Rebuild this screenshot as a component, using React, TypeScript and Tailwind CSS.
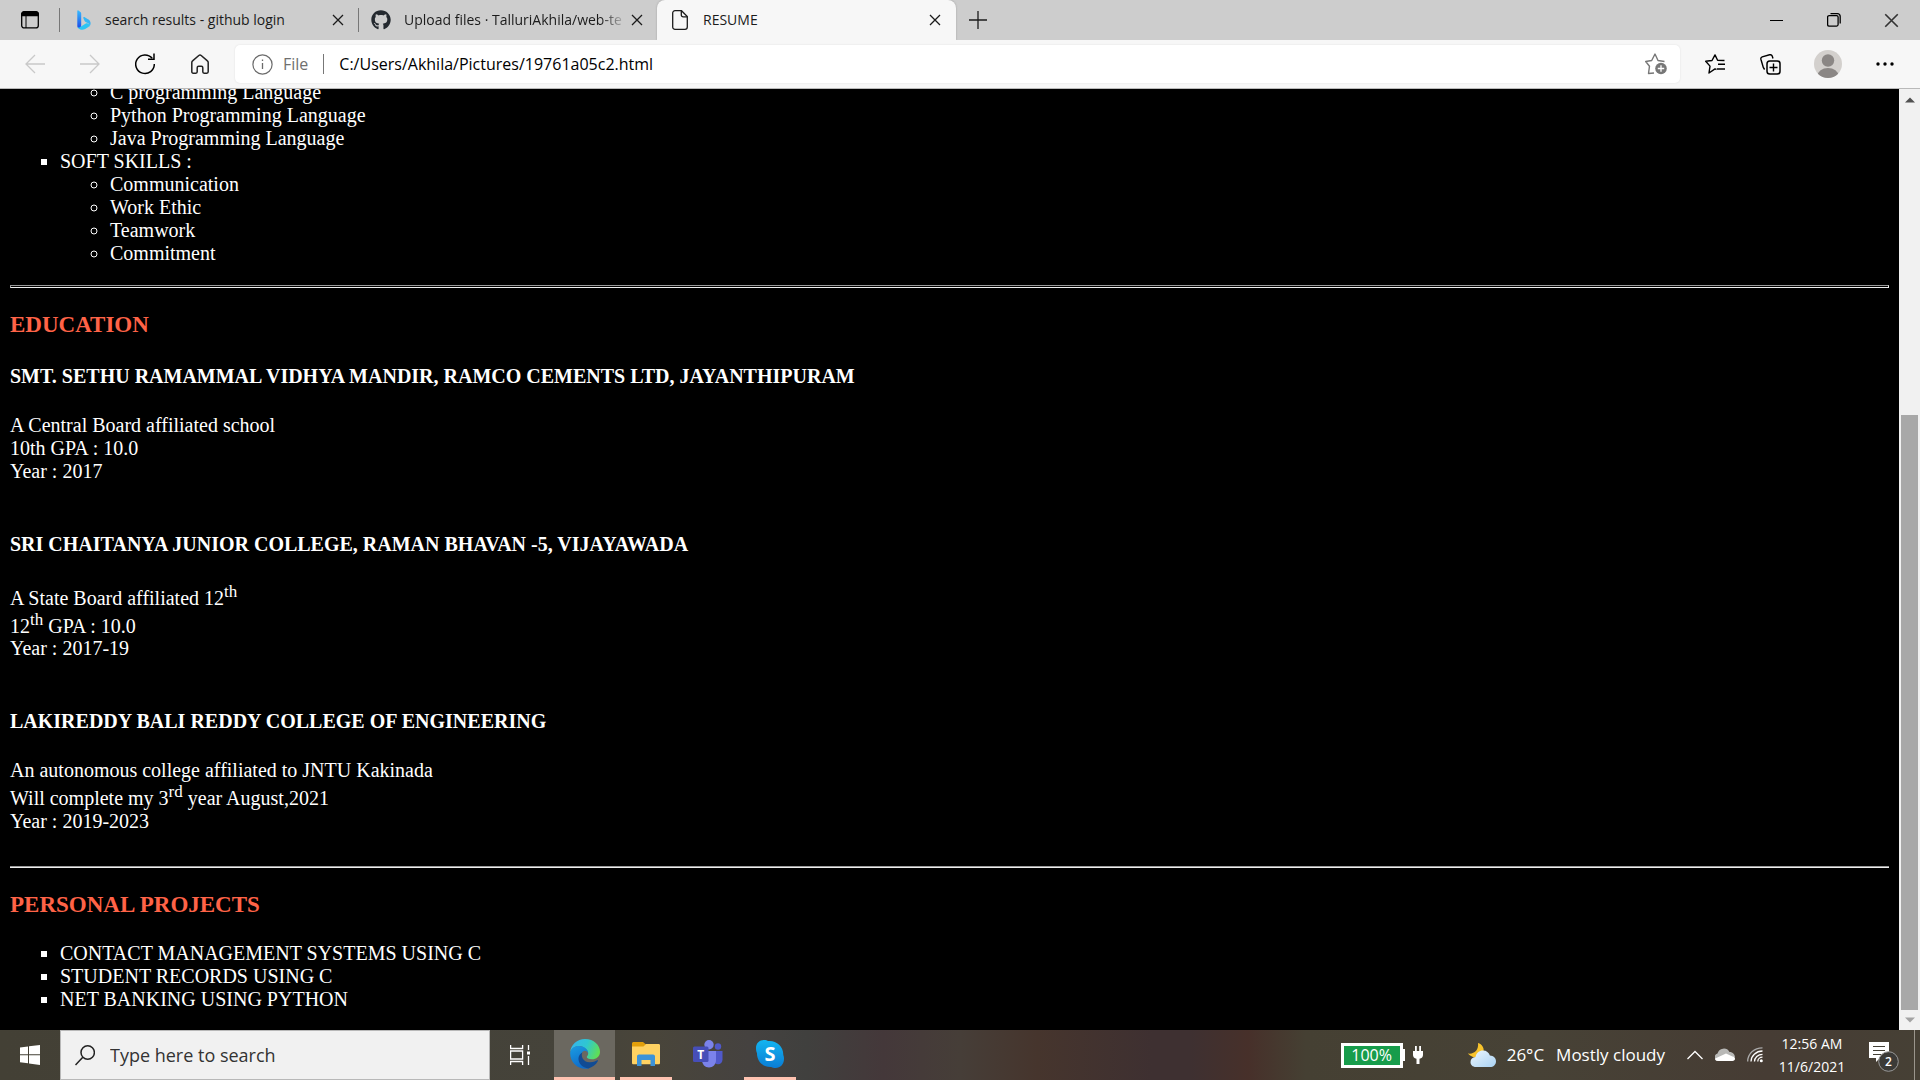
import type { ReactNode } from 'react';
import { FaGithub } from 'react-icons/fa';

type IconProps = { children: ReactNode; w?: number; h?: number; className?: string };

function Icon({ children, w = 20, h = 20, className = '' }: IconProps) {
  return (
    <svg
      width={w}
      height={h}
      viewBox={`0 0 ${w} ${h}`}
      fill="none"
      stroke="currentColor"
      strokeWidth="1.3"
      aria-hidden="true"
      className={`shrink-0 ${className}`}
    >
      {children}
    </svg>
  );
}

function Bing() {
  return (
    <Icon w={14} h={20} className="mx-px">
      <defs>
        <linearGradient id="bing-stem" x1="0" y1="0" x2="0" y2="1">
          <stop offset="0" stopColor="#37bdff" />
          <stop offset="1" stopColor="#1b48e8" />
        </linearGradient>
        <linearGradient id="bing-leaf" x1="0" y1="1" x2="1" y2="0">
          <stop offset="0" stopColor="#2dc8f5" />
          <stop offset="1" stopColor="#3aa8f5" />
        </linearGradient>
      </defs>
      <path d="M6.4 7.2c-.3.6 0 1 .2 1.5l1 2.4c.2.5.5.7 1 .9l2.6 1.3c1.2.7 1.6 2.6.3 3.8 1.8-1.2 2.400-2.900 2-4.700-.3-1.600-1.500-2.700-3-3.300L7.400 7c-.4-.2-.8-.1-1 .2z" fill="url(#bing-leaf)" stroke="none" />
      <path d="M.3 1C.3.4.9.2 1.4.5l2 1.400c.5.3.8.8.8 1.500V15c0 2-.9 3.200-2.100 3.200C.9 18.200.3 17.200.3 16z" fill="url(#bing-stem)" stroke="none" />
      <path d="M.3 15.800c.2 1.600 1.300 2 2.500 1.400l6-3.700c1-.6 2.200-.4 2.900.4.9 1.100.5 2.600-.7 3.400l-2.800 1.700c-2.400 1.300-5 .9-6.600-.6C.7 17.600.3 16.700.3 15.800z" fill="#2bc4f3" stroke="none" />
    </Icon>
  );
}

function CloseIcon({ size = 12 }: { size?: number }) {
  return (
    <svg width={size} height={size} viewBox="0 0 12 12" fill="none" stroke="currentColor" strokeWidth="1.3" aria-hidden="true">
      <path d="M1 1l10 10M11 1L1 11" />
    </svg>
  );
}

function TabClose({ name }: { name: string }) {
  return (
    <button type="button" aria-label={`Close ${name}`} className="flex size-5 shrink-0 items-center justify-center">
      <CloseIcon />
    </button>
  );
}

function TabStrip() {
  return (
    <header className="flex h-10 shrink-0 items-stretch bg-[#cdcdcd] text-sm text-[#1b1b1b]">
      <button type="button" aria-label="Tab actions menu" className="flex w-[59px] items-center pl-[21px]">
        <Icon w={18} h={18} className="text-black">
          <rect x=".7" y=".9" width="16.6" height="16" rx="2.5" />
          <path d="M.7 4.5V3.2A2.5 2.5 0 013.2.7h11.6a2.5 2.5 0 012.5 2.5v1.3z" fill="currentColor" />
          <path d="M5 5v12" strokeWidth="1" />
        </Icon>
      </button>
      <div className="my-2 w-px bg-[#777]" />
      <div className="flex w-[298px] items-center pr-[10px] pl-4">
        <Bing />
        <span className="ml-[13px] flex-1 whitespace-nowrap">search results - github login</span>
        <TabClose name="search results" />
      </div>
      <div className="my-2 w-px bg-[#777]" />
      <div className="flex w-[298px] items-center pr-[10px] pl-3">
        <FaGithub size={20} color="#24292f" className="shrink-0" />
        <span className="ml-[13px] flex-1 whitespace-nowrap [mask-image:linear-gradient(to_right,black_88%,transparent)]">
          Upload files · TalluriAkhila/web-te
        </span>
        <TabClose name="Upload files" />
      </div>
      <div className="flex w-[299px] items-center rounded-t-lg bg-[#f7f7f7] pr-[11px] pl-[15px] shadow-[0_0_2px_#999] [clip-path:inset(0_-4px_0_-4px)]">
        <Icon w={16} h={20}>
          <path d="M3 .7h6.500l5.800 5.800V17a2.300 2.300 0 01-2.300 2.300H3A2.300 2.300 0 01.7 17V3A2.300 2.300 0 013 .7z" />
          <path d="M9.300.9V5a1.800 1.800 0 001.800 1.800h4" />
        </Icon>
        <span className="ml-[15px] flex-1">RESUME</span>
        <TabClose name="RESUME" />
      </div>
      <button type="button" aria-label="New tab" className="flex w-[43px] items-center justify-center">
        <Icon w={18} h={18}>
          <path d="M9 0v18M0 9h18" />
        </Icon>
      </button>
      <div className="flex-1" />
      <button type="button" aria-label="Minimize" className="flex w-[57px] items-center justify-center text-black">
        <Icon w={14} h={14}>
          <path d="M0 7.500h13" strokeWidth="1" />
        </Icon>
      </button>
      <button type="button" aria-label="Restore" className="flex w-[57px] items-center justify-center text-black">
        <Icon w={14} h={14}>
          <rect x=".6" y="2.6" width="10.5" height="10.5" rx="1.5" />
          <path d="M3.500.7h7a2.700 2.700 0 012.700 2.700v7" />
        </Icon>
      </button>
      <button type="button" aria-label="Close window" className="flex w-[58px] items-center justify-center text-[#333]">
        <CloseIcon size={15} />
      </button>
    </header>
  );
}

function Toolbar() {
  return (
    <nav aria-label="Browser toolbar" className="flex h-[49px] shrink-0 items-center border-b border-[#b9b9b9] bg-[#f7f7f7] pr-[22px] text-[#222]">
      <button type="button" aria-label="Back" className="flex w-[55px] justify-center pl-[14px] text-[#c9c9c9]">
        <Icon>
          <path d="M20 10H1M10 1l-9 9 9 9" />
        </Icon>
      </button>
      <button type="button" aria-label="Forward" className="flex w-[55px] justify-center pl-[14px] text-[#c9c9c9]">
        <Icon>
          <path d="M0 10h19M10 1l9 9-9 9" />
        </Icon>
      </button>
      <button type="button" aria-label="Refresh" className="flex w-[55px] justify-center pl-[14px]">
        <Icon h={22} className="text-black">
          <path d="M17.200 5.300A9.300 9.300 0 1019.300 11" strokeWidth="1.5" />
          <path d="M19 .6v5.600h-6" strokeWidth="1.5" />
        </Icon>
      </button>
      <button type="button" aria-label="Home" className="mr-[15px] flex w-[55px] justify-center pl-[14px]">
        <Icon w={18}>
          <path d="M.8 8.500c0-.7.3-1.200.8-1.600L7.800 1.500c.7-.6 1.700-.6 2.400 0l6.200 5.400c.5.4.8.9.8 1.600v9.300c0 .8-.6 1.400-1.400 1.400h-2.700c-.8 0-1.300-.6-1.300-1.400v-4c0-1-.6-1.500-1.400-1.500H7.600c-.8 0-1.400.5-1.400 1.500v4c0 .8-.5 1.400-1.300 1.400H2.200c-.8 0-1.400-.6-1.400-1.400z" strokeWidth="1.5" />
        </Icon>
      </button>
      <div className="flex h-[38px] flex-1 items-center rounded-[5px] bg-white pr-[13px] pl-[17px] text-base shadow-[0_0_2px_#ddd]">
        <Icon w={21} h={21} className="text-[#6b6b6b]">
          <circle cx="10.5" cy="10.5" r="9.6" strokeWidth="1.2" />
          <path d="M10.500 9v6M10.500 5.500v1.600" />
        </Icon>
        <span className="ml-[10px] text-[#6f6f6f]">File</span>
        <div className="mx-[15px] h-5 w-px bg-[#777]" />
        <input aria-label="Address" defaultValue="C:/Users/Akhila/Pictures/19761a05c2.html" className="min-w-0 flex-1 text-black outline-none" />
        <button type="button" aria-label="Add to favorites" className="text-[#777]">
          <Icon w={22} h={22}>
            <path d="M9 20l-5.500.5L4.500 13.200.7 8.500l6-1L10 1l3 6.500 6.500 1" strokeLinejoin="round" strokeWidth="1.4" />
            <circle cx="16" cy="15.5" r="5.8" fill="currentColor" stroke="none" />
            <path d="M16 12.300v6.400M12.800 15.500h6.400" stroke="#fff" />
          </Icon>
        </button>
      </div>
      <button type="button" aria-label="Favorites" className="ml-[25px]">
        <Icon className="text-black">
          <path d="M11.500 15.500L10 14.900 4 19l1-6.900L.7 7.300l6.300-.8L10 .9l2.600 5.300L19.500 6.500M13 10.200h7M12 15h8" strokeWidth="1.4" strokeLinejoin="round" />
        </Icon>
      </button>
      <button type="button" aria-label="Collections" className="ml-[35px]">
        <Icon w={21} h={21} className="text-black">
          <rect x="7" y="7" width="13" height="13" rx="2.8" strokeWidth="1.5" />
          <path d="M13.500 9.500v8M9.500 13.500h8M4.600 15.500L3.300 13.500.9 5.200c-.3-1.200.2-2 1.300-2.400L9.600.8c1.200-.3 2.200.2 2.600 1.300L13 4.500" strokeWidth="1.4" />
        </Icon>
      </button>
      <button type="button" aria-label="Profile" className="ml-[33px]">
        <Icon w={28} h={28}>
          <clipPath id="avatar-clip">
            <circle cx="14" cy="14" r="14" />
          </clipPath>
          <g clipPath="url(#avatar-clip)" stroke="none">
            <path d="M0 0h28v28H0z" fill="#d3d0cd" />
            <circle cx="14" cy="10.5" r="6.2" fill="#8b8785" />
            <ellipse cx="14" cy="26" rx="10.5" ry="8" fill="#8b8785" />
          </g>
        </Icon>
      </button>
      <button type="button" aria-label="Settings and more" className="ml-[30px]">
        <Icon w={26} h={20} className="text-black">
          <g fill="currentColor" stroke="none">
            <circle cx="6" cy="10" r="1.7" />
            <circle cx="13" cy="10" r="1.7" />
            <circle cx="20" cy="10" r="1.7" />
          </g>
        </Icon>
      </button>
    </nav>
  );
}

function Sup({ children }: { children: ReactNode }) {
  return <sup className="static align-super text-[17px] leading-[normal]">{children}</sup>;
}

function School({ name, children }: { name: string; children: ReactNode }) {
  return (
    <section className="pb-[23px]">
      <h4 className="mt-[27px] mb-[26px] font-bold">{name}</h4>
      {children}
    </section>
  );
}

function Heading({ children }: { children: ReactNode }) {
  return <h3 className="my-6 text-[23px] font-bold text-[#ff6347]">{children}</h3>;
}

function Resume() {
  return (
    <main className="flex min-w-0 flex-1 flex-col justify-end overflow-hidden bg-black px-[10px] pb-[19px] font-['Liberation_Serif',serif] text-xl leading-[normal] text-white">
      <ul className="list-[square] pl-[50px]">
        <li className="list-none">
          <ul className="list-[circle] pl-[50px]">
            <li>C programming Language</li>
            <li>Python Programming Language</li>
            <li>Java Programming Language</li>
          </ul>
        </li>
        <li>
          SOFT SKILLS :
          <ul className="list-[circle] pl-[50px]">
            <li>Communication</li>
            <li>Work Ethic</li>
            <li>Teamwork</li>
            <li>Commitment</li>
          </ul>
        </li>
      </ul>
      <hr className="mt-5 h-[3px] shrink-0 border border-t-[#9a9a9a] border-r-[#eee] border-b-[#eee] border-l-[#9a9a9a]" />
      <Heading>EDUCATION</Heading>
      <div className="-mt-6">
        <School name="SMT. SETHU RAMAMMAL VIDHYA MANDIR, RAMCO CEMENTS LTD, JAYANTHIPURAM">
          <p>A Central Board affiliated school</p>
          <p>10th GPA : 10.0</p>
          <p>Year : 2017</p>
        </School>
        <School name="SRI CHAITANYA JUNIOR COLLEGE, RAMAN BHAVAN -5, VIJAYAWADA">
          <p>
            A State Board affiliated 12<Sup>th</Sup>
          </p>
          <p>
            12<Sup>th</Sup> GPA : 10.0
          </p>
          <p>Year : 2017-19</p>
        </School>
        <School name="LAKIREDDY BALI REDDY COLLEGE OF ENGINEERING">
          <p>An autonomous college affiliated to JNTU Kakinada</p>
          <p>
            Will complete my 3<Sup>rd</Sup> year August,2021
          </p>
          <p>Year : 2019-2023</p>
        </School>
      </div>
      <hr className="mt-[10px] h-[2px] shrink-0 border-t border-b border-t-[#9a9a9a] border-b-[#eee]" />
      <Heading>PERSONAL PROJECTS</Heading>
      <ul className="list-[square] pl-[50px]">
        <li>CONTACT MANAGEMENT SYSTEMS USING C</li>
        <li>STUDENT RECORDS USING C</li>
        <li>NET BANKING USING PYTHON</li>
      </ul>
    </main>
  );
}

function ScrollBar() {
  return (
    <div className="flex w-[21px] shrink-0 flex-col items-center bg-[#f1f1f1]">
      <button type="button" aria-label="Scroll up" className="flex h-[21px] items-center text-[#505050]">
        <Icon w={10} h={6}>
          <path d="M0 5.500L5 .5l5 5z" fill="currentColor" stroke="none" />
        </Icon>
      </button>
      <div className="flex-[305]" />
      <div className="w-[17px] flex-[595] bg-[#a8a8a8]" />
      <button type="button" aria-label="Scroll down" className="flex h-5 items-center text-[#a3a3a3]">
        <Icon w={10} h={6}>
          <path d="M0 .5l5 5 5-5z" fill="currentColor" stroke="none" />
        </Icon>
      </button>
    </div>
  );
}

function EdgeLogo() {
  return (
    <Icon w={30} h={30}>
      <defs>
        <linearGradient id="edge-top" x1="0" y1=".3" x2="1" y2=".6">
          <stop offset="0" stopColor="#35b5ee" />
          <stop offset=".5" stopColor="#2fc7d0" />
          <stop offset="1" stopColor="#62e050" />
        </linearGradient>
        <linearGradient id="edge-side" x1="0" y1="0" x2=".4" y2="1">
          <stop offset="0" stopColor="#1b9de2" />
          <stop offset="1" stopColor="#0f6cc9" />
        </linearGradient>
      </defs>
      <g stroke="none">
        <path d="M.1 13.500C.9 5.500 7.200 0 15 0c9 0 15 6.300 15 12.700 0 4.600-3.700 7.600-8 7.600-3.600 0-5.200-1.200-5.200-2.200 0-.8 1.400-1.300 1.400-3.500C18.200 11.200 15 8 10.300 7 5.500 6.500 1.500 9 .1 13.500z" fill="url(#edge-top)" />
        <path d="M.1 13.700C1 9.500 4.600 6.900 9 6.900c5 0 9.100 3.300 9.200 7.300-.6-1.600-1.900-2.500-3.400-2.500-2 .1-4 2.500-4 6.300 0 5 4 10.500 8.400 11.200C10 32 0 25 .1 13.700z" fill="url(#edge-side)" />
        <path d="M12.300 13.500c-1.700 3.900.9 9.500 7 9.800 4.500.2 6.500-1.400 7.900-2 .7-.2 1 .3.7.8-2 3.800-5.600 6.500-9.500 7.300C12.500 29 8 24 8.500 19c.3-2.500 1.700-4.500 3.800-5.500z" fill="#114b93" />
      </g>
    </Icon>
  );
}

function ExplorerLogo() {
  return (
    <Icon w={28} h={24}>
      <g stroke="none">
        <path d="M0 1.500C0 .7.7 0 1.500 0H11l3 2.500V6H0z" fill="#e29f0b" />
        <path d="M0 4.500h11.500L14 2h12.700c.7 0 1.300.6 1.300 1.300V21c0 .8-.6 1.300-1.300 1.300H1.300C.6 22.300 0 21.800 0 21z" fill="#ffd262" />
        <path d="M5 24V14.500c0-1.200.8-2 2-2h14c1.200 0 2 .8 2 2V24h-4.500v-6h-9v6z" fill="#3d93d8" />
      </g>
    </Icon>
  );
}

function TeamsLogo() {
  return (
    <Icon w={30} h={28}>
      <g stroke="none">
        <circle cx="25" cy="6.5" r="3.2" fill="#5059c9" />
        <path d="M21 11h8.500v8.500c0 3-2 4.800-4.500 4.800-2.300 0-4-1.500-4-4z" fill="#5059c9" />
        <circle cx="16" cy="4.7" r="4.7" fill="#7b83eb" />
        <path d="M9 11h14v9c0 4.500-3 7.500-7 7.500s-7-3-7-7.500z" fill="#7b83eb" />
        <rect y="6.5" width="15.5" height="15.5" rx="1.5" fill="#464eb8" />
        <text x="7.7" y="18.5" textAnchor="middle" fill="#fff" className="font-['Open_Sans',sans-serif] text-[12px] font-bold">T</text>
      </g>
    </Icon>
  );
}

function SkypeLogo() {
  return (
    <Icon w={28} h={28}>
      <defs>
        <linearGradient id="skype-blue" x1="0" y1="0" x2="0" y2="1">
          <stop offset="0" stopColor="#13b5f0" />
          <stop offset="1" stopColor="#0a7cd4" />
        </linearGradient>
      </defs>
      <g fill="url(#skype-blue)" stroke="none">
        <path d="M8 0c2 0 3.200.5 4.200 1C20 .2 27.500 6 27.300 15c.5 1.200.7 2.400.7 3.700C28 24 24.500 28 19.500 28c-1.700 0-3-.4-4.300-1C7 27.500.8 21.500 1 13.200.3 11.500 0 10 0 8c0-4.800 3.500-8 8-8z" />
        <text x="14" y="21" textAnchor="middle" fill="#fff" className="font-['Open_Sans',sans-serif] text-[20px] font-bold">S</text>
      </g>
    </Icon>
  );
}

function TaskApp({ name, active = false, open = false, children }: { name: string; active?: boolean; open?: boolean; children: ReactNode }) {
  const size = active ? 'w-[61px] bg-[#6b6860]' : 'mx-[5px] w-[52px]';
  const line = active || open ? 'border-[#ffc3b1]' : 'border-transparent';
  return (
    <button type="button" aria-label={name} className={`flex shrink-0 items-center justify-center border-b-[3px] ${size} ${line}`}>
      {children}
    </button>
  );
}

function Taskbar() {
  return (
    <footer className="flex h-[50px] shrink-0 items-stretch bg-[linear-gradient(to_right,#434035_0%,#45433a_30%,#49453a_34%,#454240_39%,#40403e_42%,#44383a_46%,#463e38_50%,#46352d_54%,#3e3031_60%,#3e3031_62%,#47302a_65%,#454033_68%,#474236_80%,#463c34_92%,#464035_100%)] text-white">
      <button type="button" aria-label="Start" className="flex w-[60px] shrink-0 items-center justify-center">
        <Icon>
          <path d="M0 2.600l8-1.100V9.300H0zM9 1.300L20 0v9.300H9zM0 10.300h8v8L0 17.200zM9 10.300h11V20L9 18.600z" fill="#fff" stroke="none" />
        </Icon>
      </button>
      <label className="flex w-[430px] shrink-0 items-center border border-[#b8b8b8] bg-[#f1f1f1] pl-[14px] text-[#222]">
        <Icon w={20} h={21}>
          <circle cx="12.7" cy="7.5" r="6.7" strokeWidth="1.5" />
          <path d="M7.800 12.300L.5 20" strokeWidth="1.5" />
        </Icon>
        <input type="search" aria-label="Search" placeholder="Type here to search" className="ml-[15px] min-w-0 flex-1 text-lg outline-none placeholder:text-[#333]" />
      </label>
      <button type="button" aria-label="Task view" className="flex w-16 shrink-0 items-center justify-center pr-1">
        <Icon w={20} h={20}>
          <path d="M.6 0v3.500h12V0M.6 20v-3.500h12V20M.6 6h12v8H.6zM18.500 0v5M18.500 11v9" />
          <path d="M17 6.500h3v3h-3z" fill="currentColor" stroke="none" />
        </Icon>
      </button>
      <TaskApp name="Microsoft Edge" active>
        <EdgeLogo />
      </TaskApp>
      <TaskApp name="File Explorer" open>
        <ExplorerLogo />
      </TaskApp>
      <TaskApp name="Microsoft Teams">
        <TeamsLogo />
      </TaskApp>
      <TaskApp name="Skype" open>
        <SkypeLogo />
      </TaskApp>
      <div className="flex-1" />
      <div className="flex items-center">
        <div className="flex h-[25px] w-[62px] items-center justify-center border-[3px] border-white bg-[#179c4b] text-base">100%</div>
        <div className="h-3 w-[2px] bg-white" />
        <Icon w={10} h={18} className="ml-2">
          <path d="M2 0h1.800v5h2.400V0H8v5h2v4c0 2-1.200 3.200-3.500 3.800V18h-3v-5.200C1.200 12.200 0 11 0 9V5h2z" fill="#fff" stroke="none" />
        </Icon>
      </div>
      <button type="button" aria-label="Weather" className="ml-[45px] flex items-center text-[17px] whitespace-nowrap">
        <Icon w={28} h={24}>
          <defs>
            <linearGradient id="cloud-shade" x1="0" y1="0" x2="1" y2="1">
              <stop offset="0" stopColor="#edf6fd" />
              <stop offset="1" stopColor="#a9d2f3" />
            </linearGradient>
          </defs>
          <path d="M10 0c4 1 6.500 5 5.500 9C14.500 13 9 15.500 5 14c-2-.8-4-2-5-3.500C6 11.500 11 7 10 0z" fill="#f8c32c" stroke="none" />
          <path d="M8 24c-3.500 0-5.500-2.300-5.500-5s2-4.800 5-4.900C8.200 10 11.200 7.500 15 7.500c3.500 0 6 2 6.900 5 3.500.2 6.100 2.400 6.100 5.700 0 3.500-2.500 5.800-6 5.800z" fill="url(#cloud-shade)" stroke="none" />
        </Icon>
        <span className="ml-[11px]">26°C</span>
        <span className="ml-3">Mostly cloudy</span>
      </button>
      <button type="button" aria-label="Show hidden icons" className="ml-[22px] flex items-center">
        <Icon w={16} h={10}>
          <path d="M.5 9L8 1.500 15.500 9" />
        </Icon>
      </button>
      <button type="button" aria-label="OneDrive" className="ml-3 flex items-center">
        <Icon w={20} h={14}>
          <g stroke="none">
            <path d="M2 13a4 4 0 01.5-7.500A6.500 6.500 0 0114.500 4C18 4 20 6.500 20 9.500L12 10z" fill="#b8b8b6" />
            <path d="M3 13c-2 0-3-1-2.800-2.500L11 5.500l6.500 3c2 .2 2.500 1.500 2.500 2.300 0 1.300-1 2.200-2.500 2.200z" fill="#fff" />
          </g>
        </Icon>
      </button>
      <button type="button" aria-label="Network" className="mr-px ml-3 flex items-center">
        <Icon w={16} h={16}>
          <path d="M.7 14.500C.7 7 7 .8 15.500.8" stroke="#aaa" />
          <path d="M4 14.500C4 9 9 4 15.500 4M7.500 14.500c0-4 3.500-7.200 8-7.200M10.800 14.500c0-2.500 2-4.300 4.700-4.300" />
          <circle cx="14.3" cy="13.8" r="1.5" fill="currentColor" stroke="none" />
        </Icon>
      </button>
      <button type="button" aria-label="Clock" className="flex w-24 flex-col items-center justify-center text-sm leading-[23px] whitespace-nowrap">
        <span>12:56 AM</span>
        <span>11/6/2021</span>
      </button>
      <button type="button" aria-label="Notifications, 2 new" className="ml-[9px] flex w-[45px] items-center">
        <Icon w={30} h={32} className="mt-1">
          <path d="M0 1h20v16H11l-4 4v-4H0z" fill="#fff" stroke="none" />
          <path d="M4 5.500h12M4 9.500h12M4 13.500h8" stroke="#444036" strokeWidth="1" />
          <circle cx="19.5" cy="20.5" r="9.8" fill="#3b3a37" stroke="#999" strokeWidth="1" />
          <text x="19.5" y="25" textAnchor="middle" fill="#fff" stroke="none" className="font-['Open_Sans',sans-serif] text-[12px] font-semibold">2</text>
        </Icon>
      </button>
      <div className="mr-[5px] w-px bg-[#9a958c]" />
    </footer>
  );
}

export default function App() {
  return (
    <div className="flex h-screen flex-col overflow-hidden font-['Open_Sans','Noto_Sans',sans-serif]">
      <TabStrip />
      <Toolbar />
      <div className="flex min-h-0 flex-1">
        <Resume />
        <ScrollBar />
      </div>
      <Taskbar />
    </div>
  );
}
